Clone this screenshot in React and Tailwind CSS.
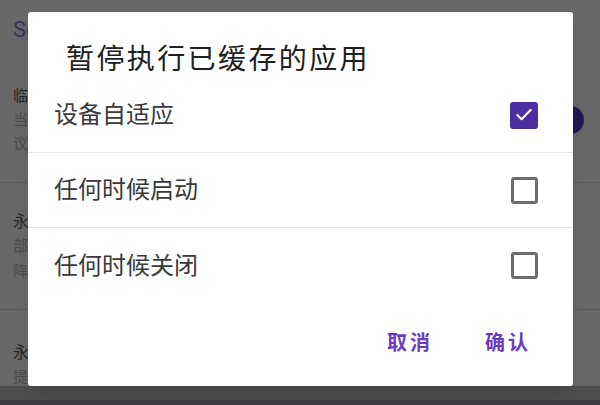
import { Check } from 'lucide-react'

const font = { fontFamily: 'Roboto, "Noto Sans CJK SC", sans-serif' }

function Box({ checked }) {
  if (checked) {
    return (
      <div className="w-[28px] h-[27px] rounded-[3px] bg-[#4b2e9f] flex items-center justify-center">
        <Check size={20} strokeWidth={2.6} className="text-white" />
      </div>
    )
  }
  return <div className="w-[27px] h-[27px] rounded-[3px] border-[3px] border-[#6e6e6e]" />
}

function Row({ label, checked, last }) {
  return (
    <div
      className={
        'h-[75px] flex items-center justify-between pl-[26px] pr-[35px] ' +
        (last ? '' : 'border-b border-[#e3e3e3]')
      }
    >
      <span className="text-[24px] text-[#3a3a3a]">{label}</span>
      <Box checked={checked} />
    </div>
  )
}

export default function App() {
  return (
    <div className="relative w-[600px] h-[405px] overflow-hidden bg-[#676767]" style={font}>
      {/* page behind the dialog */}
      <div className="h-[58px] pl-[13px] flex items-center">
        <span className="text-[22px] text-[#35315c]">Se</span>
      </div>
      <div className="h-[125px] pl-[13px] pr-[16px] flex items-center justify-between border-b border-[#5a5a5a]">
        <div className="leading-[24px]">
          <div className="text-[15px] text-[#262626]">临时</div>
          <div className="text-[15px] text-[#4b4b4b]">当前</div>
          <div className="text-[15px] text-[#4b4b4b]">议</div>
        </div>
        <div className="w-[28px] h-[28px] rounded-full bg-[#1f1950]" />
      </div>
      <div className="h-[127px] pl-[13px] pt-[26px] border-b border-[#5a5a5a] leading-[25px]">
        <div className="text-[16px] text-[#262626]">永久</div>
        <div className="text-[15px] text-[#4b4b4b]">部分</div>
        <div className="text-[15px] text-[#4b4b4b]">降低</div>
      </div>
      <div className="h-[76px] pl-[13px] pt-[31px] leading-[24px]">
        <div className="text-[16px] text-[#262626]">永久</div>
        <div className="text-[15px] text-[#4b4b4b]">提示</div>
      </div>
      <div className="h-[14px] bg-[#4e4e4e]" />
      <div className="h-[5px] bg-[#3c3c42]" />

      {/* dialog */}
      <div className="absolute left-[28px] top-[12px] w-[545px] h-[374px] bg-white rounded-[3px] shadow-lg">
        <div className="h-[66px] pt-[30px] pl-[38px]">
          <div className="text-[28px] leading-[36px] tracking-[2.4px] text-[#202020]">暂停执行已缓存的应用</div>
        </div>
        <Row label="设备自适应" checked />
        <Row label="任何时候启动" />
        <Row label="任何时候关闭" last />
        <div className="flex justify-end gap-[52px] pr-[42px] pt-[28px]">
          <span className="text-[20px] leading-[24px] tracking-[3px] font-semibold text-[#6a3cc0]">取消</span>
          <span className="text-[20px] leading-[24px] tracking-[3px] font-semibold text-[#6a3cc0]">确认</span>
        </div>
      </div>
    </div>
  )
}
